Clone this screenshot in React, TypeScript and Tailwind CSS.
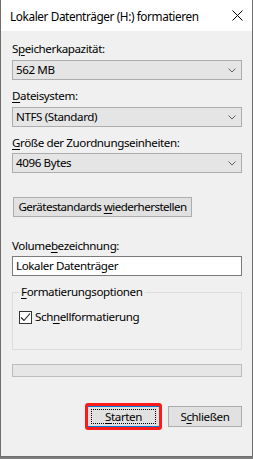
const font = { fontFamily: '"Segoe UI", "Noto Sans", sans-serif' }

function Chevron() {
  return (
    <svg width="8" height="5" viewBox="0 0 8 5" className="shrink-0">
      <path d="M0.5 0.5 L4 4 L7.5 0.5" fill="none" stroke="#606060" strokeWidth="1" />
    </svg>
  )
}

function Combo({ value }: { value: string }) {
  return (
    <div className="flex items-center justify-between w-[230px] h-[20px] bg-[#e5e5e5] border border-[#adadad] pl-[3px] pr-[5px]">
      <span>{value}</span>
      <Chevron />
    </div>
  )
}

export default function App() {
  return (
    <div
      className="w-[253px] h-[459px] bg-[#7d7d7d] text-[11.6px] leading-[16px] text-black tracking-[-0.4px] whitespace-nowrap"
      style={font}
    >
      <div className="w-[253px] h-[457px] flex flex-col border-x border-b border-[#6e6e6e]">
        {/* Title bar */}
        <div className="h-[31px] bg-white flex items-center justify-between pl-[9px] pr-[9px] shrink-0">
          <span className="text-[11.8px]">Lokaler Datenträger (H:) formatieren</span>
          <svg width="11" height="11" viewBox="0 0 11 11">
            <path d="M0.5 0.5 L10.5 10.5 M10.5 0.5 L0.5 10.5" stroke="#000" strokeWidth="1" />
          </svg>
        </div>

        {/* Body */}
        <div className="flex-1 bg-[#f0f0f0] pl-[11px] pt-[10px] flex flex-col">
          <div className="h-[16px]">
            S<u className="underline-offset-[2px]">p</u>eicherkapazität:
          </div>
          <div className="mt-[3px]">
            <Combo value="562 MB" />
          </div>

          <div className="h-[16px] mt-[8px]">
            <u className="underline-offset-[2px]">D</u>ateisystem:
          </div>
          <div className="mt-[3px]">
            <Combo value="NTFS (Standard)" />
          </div>

          <div className="h-[16px] mt-[8px]">
            <u className="underline-offset-[2px]">G</u>röße der Zuordnungseinheiten:
          </div>
          <div className="mt-[2px]">
            <Combo value="4096 Bytes" />
          </div>

          <div className="mt-[24px] ml-[1px]">
            <button className="w-[179px] h-[20px] bg-[#e1e1e1] border border-[#adadad] flex items-center justify-center whitespace-nowrap tracking-[-0.55px]">
              <span>
                Gerätestandards <u className="underline-offset-[2px]">w</u>iederherstellen
              </span>
            </button>
          </div>

          <div className="h-[16px] mt-[21px]">
            Volume<u className="underline-offset-[2px]">b</u>ezeichnung:
          </div>
          <div className="mt-[2px] w-[230px] h-[20px] bg-white border border-[#7a7a7a] pl-[3px] flex items-center">
            Lokaler Datenträger
          </div>

          <fieldset className="mt-[8px] w-[230px] h-[66px] border border-[#dcdcdc] pl-[6px]">
            <legend className="px-[2px] h-[16px]">
              <u className="underline-offset-[2px]">F</u>ormatierungsoptionen
            </legend>
            <div className="flex items-center mt-[9px]">
              <div className="w-[13px] h-[13px] bg-white border border-[#333333] flex items-center justify-center">
                <svg width="11" height="11" viewBox="0 0 11 11">
                  <path d="M1 5.5 L4 8.5 L10 1.5" fill="none" stroke="#222" strokeWidth="1.1" />
                </svg>
              </div>
              <span className="ml-[3px]">
                Sch<u className="underline-offset-[2px]">n</u>ellformatierung
              </span>
            </div>
          </fieldset>

          <div className="mt-[14px] w-[230px] h-[13px] bg-[#e6e6e6] border border-[#bcbcbc]" />

          <div className="mt-[29px] w-[230px] flex justify-end gap-[8px]">
            <div className="relative">
              <button className="w-[73px] h-[21px] bg-[#e1e1e1] border border-[#0078d7] flex items-center justify-center">
                <span className="outline outline-1 outline-dotted outline-black outline-offset-[-1px] w-[65px] h-[15px] flex items-center justify-center">
                  <span>
                    <u className="underline-offset-[2px]">S</u>tarten
                  </span>
                </span>
              </button>
              <div className="absolute -top-[3px] -bottom-[3px] -left-[2px] -right-[2px] border-[3px] border-[#ff1a1a] rounded-[3px]" />
            </div>
            <button className="w-[74px] h-[21px] bg-[#e1e1e1] border border-[#adadad] flex items-center justify-center">
              <span>
                S<u className="underline-offset-[2px]">c</u>hließen
              </span>
            </button>
          </div>
        </div>
      </div>
    </div>
  )
}
